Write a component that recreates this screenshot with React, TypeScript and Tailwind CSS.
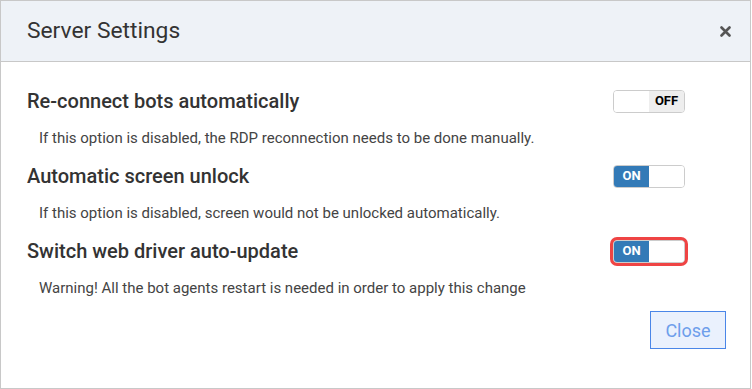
import React from "react";

function Toggle({ on, focus }: { on: boolean; focus?: boolean }) {
  return (
    <div
      className={
        "flex w-[72px] h-[23px] rounded-[4px] border border-[#cccccc] overflow-hidden bg-white " +
        (focus ? "ring-[3px] ring-[#ef4444]" : "")
      }
    >
      {on ? (
        <>
          <div className="w-[35px] h-full bg-[#337ab7] text-white text-[13px] font-bold flex items-center justify-center">
            ON
          </div>
          <div className="flex-1 h-full bg-white" />
        </>
      ) : (
        <>
          <div className="w-[35px] h-full bg-white" />
          <div className="flex-1 h-full bg-[#eeeeee] text-black text-[13px] font-bold flex items-center justify-center">
            OFF
          </div>
        </>
      )}
    </div>
  );
}

function Setting({
  title,
  desc,
  on,
  focus,
}: {
  title: string;
  desc: string;
  on: boolean;
  focus?: boolean;
}) {
  return (
    <div className="flex flex-col">
      <div className="flex items-center justify-between h-[30px]">
        <div className="text-[20px] font-medium text-[#333333] leading-none">{title}</div>
        <Toggle on={on} focus={focus} />
      </div>
      <div className="mt-[12px] pl-[12px] text-[15px] leading-[20px] text-[#444444]">{desc}</div>
    </div>
  );
}

export default function App() {
  return (
    <div
      className="w-[752px] h-[389px] bg-white"
      style={{ fontFamily: "Roboto, 'Liberation Sans', sans-serif" }}
    >
      <div className="w-[751px] h-[389px] border border-[#c8c8c8] flex flex-col bg-white">
        <div className="h-[61px] shrink-0 bg-[#eef2f7] border-b border-[#c8c8c8] flex items-center justify-between pl-[26px] pr-[19px]">
          <div className="text-[22.8px] text-[#333333] leading-none">Server Settings</div>
          <svg width="11" height="11" viewBox="0 0 11 11" className="mt-[1px]">
            <path d="M1.5 1.5 L9.5 9.5 M9.5 1.5 L1.5 9.5" stroke="#555555" strokeWidth="2.6" strokeLinecap="round" />
          </svg>
        </div>
        <div className="flex flex-col pt-[24px] pl-[26px] pr-[65px] gap-[13px]">
          <Setting
            title="Re-connect bots automatically"
            desc="If this option is disabled, the RDP reconnection needs to be done manually."
            on={false}
          />
          <Setting
            title="Automatic screen unlock"
            desc="If this option is disabled, screen would not be unlocked automatically."
            on={true}
          />
          <Setting
            title="Switch web driver auto-update"
            desc="Warning! All the bot agents restart is needed in order to apply this change"
            on={true}
            focus
          />
        </div>
        <div className="flex justify-end pr-[24px] mt-[13px]">
          <button className="w-[76px] h-[38px] border border-[#4a86e8] bg-[#eaf1fd] text-[#6d9eeb] text-[18px]">
            Close
          </button>
        </div>
      </div>
    </div>
  );
}
